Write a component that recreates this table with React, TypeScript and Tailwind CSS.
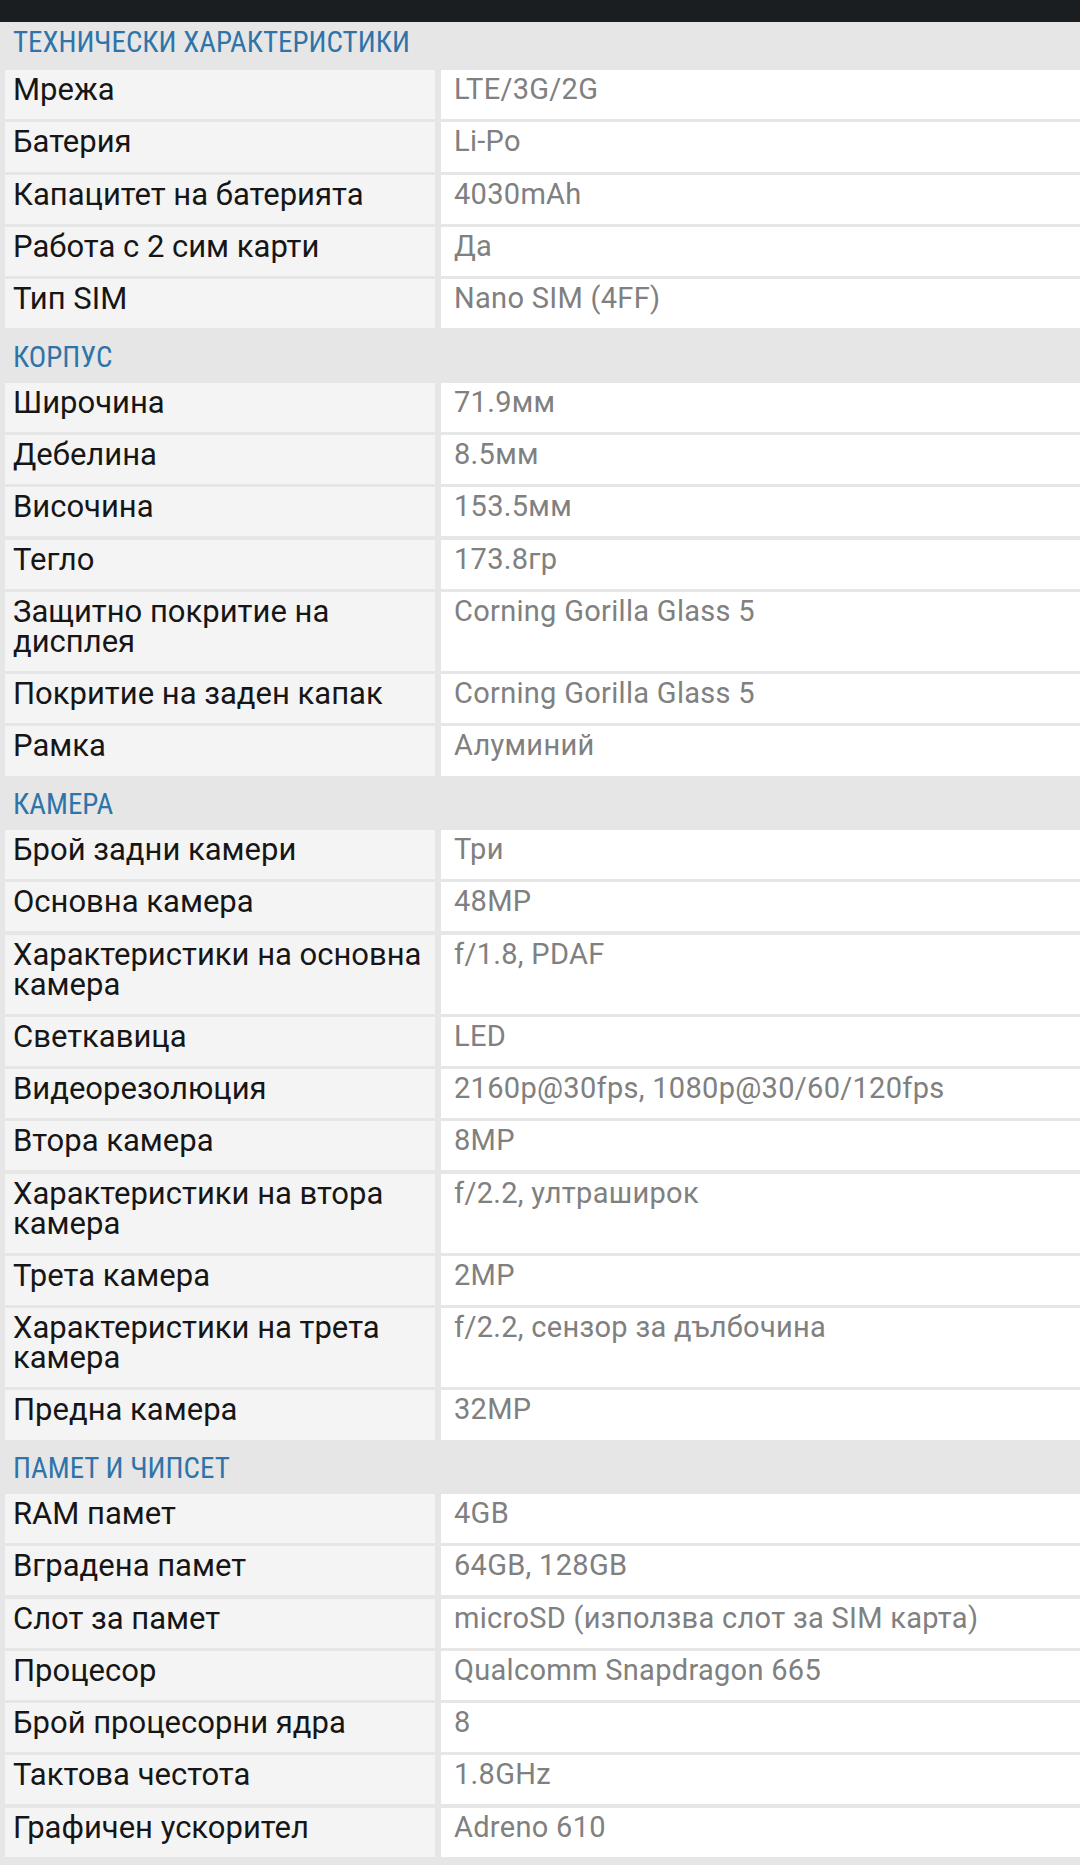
type Row = { label: string; value: string };
type Section = { title: string; rows: Row[] };

const sections: Section[] = [
  {
    title: 'ТЕХНИЧЕСКИ ХАРАКТЕРИСТИКИ',
    rows: [
      { label: 'Мрежа', value: 'LTE/3G/2G' },
      { label: 'Батерия', value: 'Li-Po' },
      { label: 'Капацитет на батерията', value: '4030mAh' },
      { label: 'Работа с 2 сим карти', value: 'Да' },
      { label: 'Тип SIM', value: 'Nano SIM (4FF)' },
    ],
  },
  {
    title: 'КОРПУС',
    rows: [
      { label: 'Широчина', value: '71.9мм' },
      { label: 'Дебелина', value: '8.5мм' },
      { label: 'Височина', value: '153.5мм' },
      { label: 'Тегло', value: '173.8гр' },
      { label: 'Защитно покритие на дисплея', value: 'Corning Gorilla Glass 5' },
      { label: 'Покритие на заден капак', value: 'Corning Gorilla Glass 5' },
      { label: 'Рамка', value: 'Алуминий' },
    ],
  },
  {
    title: 'КАМЕРА',
    rows: [
      { label: 'Брой задни камери', value: 'Три' },
      { label: 'Основна камера', value: '48MP' },
      { label: 'Характеристики на основна камера', value: 'f/1.8, PDAF' },
      { label: 'Светкавица', value: 'LED' },
      { label: 'Видеорезолюция', value: '2160p@30fps, 1080p@30/60/120fps' },
      { label: 'Втора камера', value: '8MP' },
      { label: 'Характеристики на втора камера', value: 'f/2.2, ултраширок' },
      { label: 'Трета камера', value: '2MP' },
      { label: 'Характеристики на трета камера', value: 'f/2.2, сензор за дълбочина' },
      { label: 'Предна камера', value: '32MP' },
    ],
  },
  {
    title: 'ПАМЕТ И ЧИПСЕТ',
    rows: [
      { label: 'RAM памет', value: '4GB' },
      { label: 'Вградена памет', value: '64GB, 128GB' },
      { label: 'Слот за памет', value: 'microSD (използва слот за SIM карта)' },
      { label: 'Процесор', value: 'Qualcomm Snapdragon 665' },
      { label: 'Брой процесорни ядра', value: '8' },
      { label: 'Тактова честота', value: '1.8GHz' },
      { label: 'Графичен ускорител', value: 'Adreno 610' },
    ],
  },
];

function SpecRow({ row }: { row: Row }) {
  return (
    <div className="grid grid-cols-[430px_1fr] gap-x-[6px]">
      <div className="bg-[#f4f4f4] pl-[8px] pr-0 pt-[5px] pb-[14.1px] text-[31px] leading-[30px] text-[#161616] font-['Roboto','Noto_Sans',sans-serif]">
        {row.label}
      </div>
      <div className="bg-white pl-[13px] pr-3 pt-[4px] pb-[15.1px] text-[29px] leading-[30px] tracking-[0.3px] text-[#808080] font-['Roboto','Noto_Sans',sans-serif]">
        {row.value}
      </div>
    </div>
  );
}

export default function App() {
  return (
    <div lang="bg" className="min-h-screen w-[1080px] bg-[#e6e6e6]">
      <div className="h-[22px] bg-[#1b1e21]" />
      <div className="flex flex-col gap-[3.2px] pl-[5px]">
        {sections.map((section, i) => (
          <div key={section.title} className="contents">
            <div
              className={`${i === 0 ? 'h-[45px] pt-[0px]' : 'h-[48px] pt-[5px]'} pl-[8px] text-[29px] leading-[40px] text-[#2f74a9] font-['Roboto_Condensed','Roboto',sans-serif]`}
            >
              {section.title}
            </div>
            {section.rows.map((row) => (
              <SpecRow key={row.label} row={row} />
            ))}
          </div>
        ))}
      </div>
    </div>
  );
}
